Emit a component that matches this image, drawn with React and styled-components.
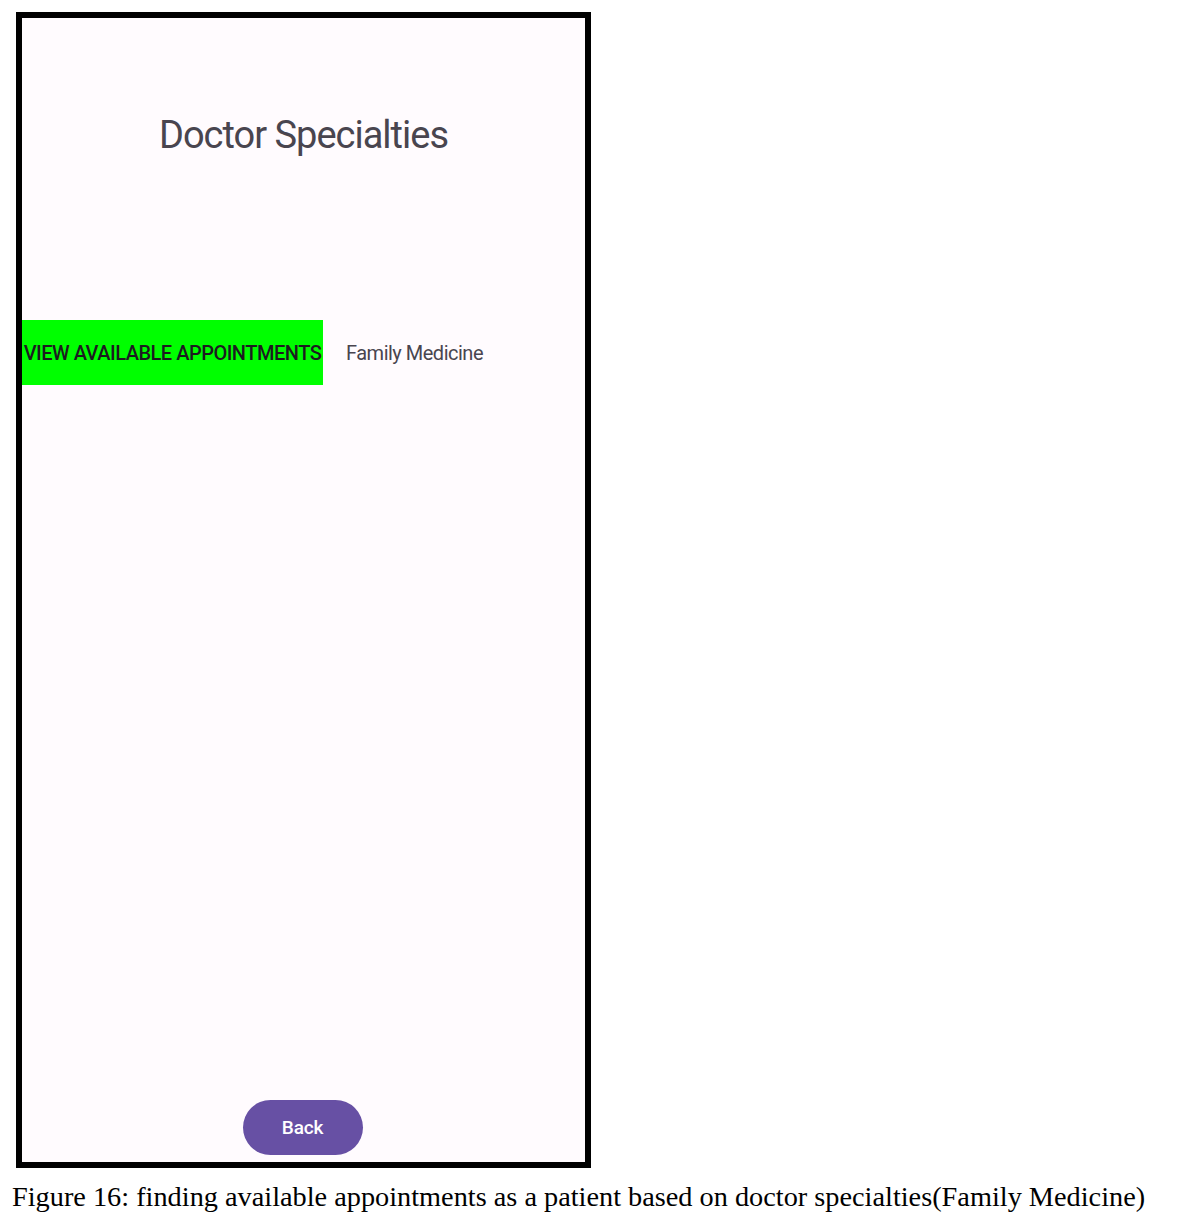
import styled, { createGlobalStyle } from 'styled-components';

const GlobalStyle = createGlobalStyle`
  html, body {
    margin: 0;
    padding: 0;
    background: #ffffff;
  }
`;

const Page = styled.div`
  width: 1181px;
  height: 1224px;
  display: flex;
  flex-direction: column;
  padding: 12px 0 0 16px;
  box-sizing: border-box;
`;

const PhoneFrame = styled.div`
  width: 575px;
  height: 1156px;
  box-sizing: border-box;
  border: 6px solid #000;
  background: #fffbfe;
  display: flex;
  flex-direction: column;
  font-family: Roboto, 'Noto Sans', sans-serif;
`;

const Title = styled.h1`
  margin: 95px 0 0;
  text-align: center;
  font-size: 38px;
  font-weight: 400;
  line-height: 44px;
  letter-spacing: -1px;
  color: #49454f;
`;

const SpecialtyRow = styled.div`
  margin-top: 163px;
  display: flex;
  align-items: center;
  gap: 23px;
`;

const ViewButton = styled.button`
  width: 301px;
  height: 65px;
  border: 0;
  border-radius: 0;
  padding: 0;
  background: #00ff00;
  color: #1d1b20;
  font-family: Roboto, 'Noto Sans', sans-serif;
  font-size: 20px;
  font-weight: 500;
  letter-spacing: -0.5px;
  white-space: nowrap;
  text-align: center;
`;

const SpecialtyName = styled.span`
  font-size: 20px;
  letter-spacing: -0.5px;
  color: #49454f;
`;

const Spacer = styled.div`
  flex: 1;
`;

const BackButton = styled.button`
  align-self: center;
  margin: 0 0 7px -2px;
  width: 120px;
  height: 55px;
  border: 0;
  border-radius: 28px;
  background: #6750a4;
  color: #fff;
  font-family: Roboto, 'Noto Sans', sans-serif;
  font-size: 19px;
  font-weight: 500;
  letter-spacing: -0.2px;
`;

const Caption = styled.p`
  margin: 14px 0 0 -4px;
  font-family: 'Liberation Serif', 'Times New Roman', serif;
  font-size: 28.3px;
  line-height: 30px;
  color: #000;
  white-space: nowrap;
`;

export default function App() {
  return (
    <Page>
      <GlobalStyle />
      <PhoneFrame>
        <Title>Doctor Specialties</Title>
        <SpecialtyRow>
          <ViewButton>VIEW AVAILABLE APPOINTMENTS</ViewButton>
          <SpecialtyName>Family Medicine</SpecialtyName>
        </SpecialtyRow>
        <Spacer />
        <BackButton>Back</BackButton>
      </PhoneFrame>
      <Caption>Figure 16: finding available appointments as a patient based on doctor specialties(Family Medicine)</Caption>
    </Page>
  );
}
